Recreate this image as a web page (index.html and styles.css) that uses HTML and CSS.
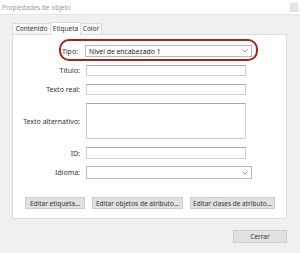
FILE: index.html
```html
<!DOCTYPE html>
<html>
<head>
<meta charset="utf-8">
<link rel="stylesheet" href="styles.css">
</head>
<body>
<div class="titlebar">
  <span class="title">Propiedades de objeto</span>
  <span class="close"></span>
</div>
<div class="tabs">
  <div class="tab t1">Contenido</div>
  <div class="tab active">Etiqueta</div>
  <div class="tab t3">Color</div>
</div>
<div class="panel">
  <div class="row tipo-row">
    <label class="lbl tipo-lbl">Tipo:</label>
    <div class="select tipo-select"><span>Nivel de encabezado 1</span><svg class="chev" viewBox="0 0 6 4" width="6" height="4"><path d="M0.5 0.5 L3 3 L5.5 0.5" fill="none" stroke="#888" stroke-width="0.9"/></svg></div>
    <div class="highlight"></div>
  </div>
  <div class="row r-titulo">
    <label class="lbl">Título:</label>
    <div class="input"></div>
  </div>
  <div class="row r-real">
    <label class="lbl">Texto real:</label>
    <div class="input"></div>
  </div>
  <div class="row r-alt">
    <label class="lbl">Texto alternativo:</label>
    <div class="input textarea"></div>
  </div>
  <div class="row r-id">
    <label class="lbl">ID:</label>
    <div class="input id"></div>
  </div>
  <div class="row r-idioma">
    <label class="lbl">Idioma:</label>
    <div class="select idioma"><span></span><svg class="chev" viewBox="0 0 6 4" width="6" height="4"><path d="M0.5 0.5 L3 3 L5.5 0.5" fill="none" stroke="#888" stroke-width="0.9"/></svg></div>
  </div>
  <div class="buttons">
    <div class="btn b1">Editar etiqueta...</div>
    <div class="btn b2">Editar objetos de atributo...</div>
    <div class="btn b3">Editar clases de atributo...</div>
  </div>
</div>
<div class="footer">
  <div class="btn cerrar">Cerrar</div>
</div>
</body>
</html>
```
FILE: styles.css
```css
* { box-sizing: border-box; }
html, body { margin: 0; padding: 0; }
body {
  width: 300px;
  height: 253px;
  background: #f0f0f0;
  font-family: "Noto Sans", "Open Sans", sans-serif;
  font-size: 7px;
  color: #222;
  overflow: hidden;
}
.titlebar {
  height: 15px;
  background: #fff;
  display: flex;
  align-items: center;
  justify-content: space-between;
  padding: 0 2px 0 2px;
  border-bottom: 1px solid #e6e6e6;
}
.title { color: #9a9a9a; font-size: 6.5px; }
.close {
  width: 8px; height: 9px;
  background: #e6e6e6;
  border: 1px solid #ddd;
  margin-top: 1px;
}
.tabs {
  display: flex;
  align-items: flex-end;
  margin: 7px 0 0 12px;
  height: 12px;
}
.tab {
  height: 11px;
  line-height: 10px;
  text-align: center;
  font-size: 6.5px;
  background: #f7f7f7;
  border: 1px solid #dcdcdc;
  border-bottom: none;
  margin-right: -1px;
  color: #333;
  white-space: nowrap;
}
.t1 { width: 39px; }
.t3 { width: 22px; }
.tab.active {
  height: 13px;
  background: #fff;
  position: relative;
  z-index: 1;
  margin-bottom: -1px;
  width: 31px;
  line-height: 11px;
}
.panel {
  margin-left: 12px;
  width: 275px;
  height: 185px;
  background: #fff;
  border: 1px solid #dcdcdc;
  display: flex;
  flex-direction: column;
  padding-top: 10px;
}
.row {
  display: flex;
  align-items: center;
  position: relative;
}
.lbl {
  width: 73px;
  text-align: right;
  padding-right: 6px;
  color: #333;
  flex: none;
}
.input {
  width: 160px;
  height: 11px;
  border: 1px solid #cfcfcf;
  border-top: 1px solid #a8a8a8;
  background: #fff;
}
.select {
  height: 13px;
  border: 1px solid #b9b9b9;
  background: #fff;
  display: flex;
  align-items: center;
  justify-content: space-between;
  padding: 0 3px 0 3px;
}
.chev { flex: none; }
.tipo-row { height: 12px; }
.tipo-lbl { width: 72px; padding-right: 7px; }
.tipo-select { width: 167px; height: 12px; color: #222; font-size: 6.8px; }
.highlight {
  position: absolute;
  left: 46px;
  top: -6px;
  width: 199px;
  height: 22px;
  border: 2.5px solid #a5231b;
  border-radius: 10px;
}
.r-titulo { margin-top: 8px; }
.r-real { margin-top: 8px; }
.r-alt { margin-top: 8px; }
.textarea { height: 36px; }
.r-id { margin-top: 8px; }
.input.id { height: 12px; }
.r-idioma { margin-top: 7px; }
.idioma { width: 166px; height: 13px; }
.buttons {
  display: flex;
  margin-top: 18px;
  padding-left: 12px;
}
.btn {
  height: 12px;
  background: #e1e1e1;
  border: 1px solid #cdcdcd;
  display: flex;
  align-items: center;
  justify-content: center;
  color: #333;
  font-size: 6.5px;
}
.b1 { width: 60px; }
.b2 { width: 91px; margin-left: 7px; }
.b3 { width: 85px; margin-left: 7px; }
.footer {
  display: flex;
  justify-content: flex-end;
  padding-right: 13px;
  margin-top: 11px;
}
.cerrar { width: 54px; height: 13px; }
```
